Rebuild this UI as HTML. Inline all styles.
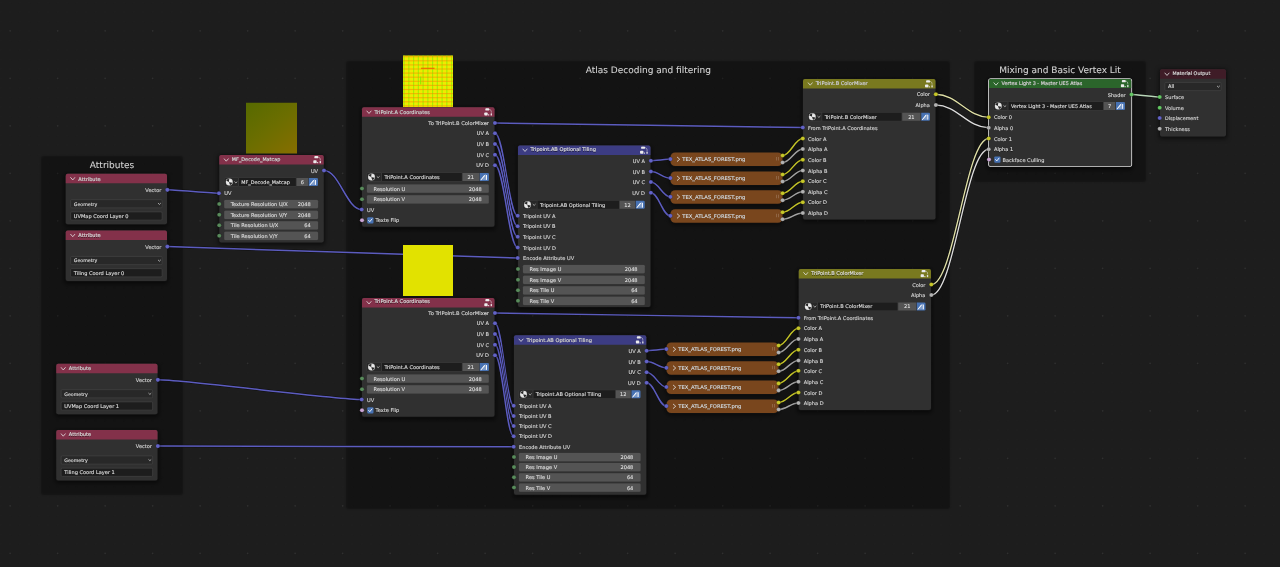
<!DOCTYPE html>
<html><head><meta charset="utf-8"><title>Node Editor</title><style>
*{box-sizing:border-box}
html,body{margin:0;padding:0}
body{width:1280px;height:567px;overflow:hidden;position:relative;background:#1d1d1d;font-family:"DejaVu Sans", "Liberation Sans", sans-serif;font-size:20.2px;color:#dcdcdc;line-height:32px;text-rendering:geometricPrecision;-webkit-text-stroke:0.56px currentColor}
svg.layer{position:absolute;left:0;top:0;width:5120px;height:2268px;overflow:visible}
#root{position:absolute;left:0;top:0;width:5120px;height:2268px;transform:scale(0.25);transform-origin:0 0}
#wrap{position:absolute;left:0;top:0;width:1280px;height:567px;will-change:transform;overflow:hidden}
#sub{position:absolute;left:0;top:0;width:5120px;height:2268px;background-image:radial-gradient(circle,#212121 0px,#212121 1.6px,rgba(33,33,33,0) 3.4px);background-size:38px 38px;background-position:-16.4px -9.2px}
.frame{position:absolute;background:rgba(0,0,0,0.33);border-radius:8px;box-shadow:0 0 5.2px 2px rgba(0,0,0,0.3)}
.ftitle{position:absolute;left:0;right:0;text-align:center;font-size:36px;line-height:44px;color:#d4d4d4;white-space:nowrap;-webkit-text-stroke:0.32px currentColor}
.node{position:absolute;background:#303030;border-radius:7.6px;box-shadow:0 0 0 2.4px #141414,0 6px 16px 4px rgba(0,0,0,0.55)}
.node.sel{box-shadow:0 0 0 3.4px #dadada,0 6px 16px 6px rgba(0,0,0,0.55)}
.hdr{position:absolute;left:0;top:0;right:0;border-radius:7.6px 7.6px 0 0;white-space:nowrap}
.chev{position:absolute;left:16.4px;top:7.6px;width:24px;height:24px}
.ht{position:absolute;left:50.4px;top:2px;line-height:32px;color:#e0e0e0;text-shadow:0 2px 2.4px rgba(0,0,0,0.7)}
.gicon{position:absolute;right:8.8px;top:3.2px;width:34px;height:31.6px}
.lab{position:absolute;white-space:nowrap;line-height:32px;text-shadow:0 1.6px 2px rgba(0,0,0,0.6)}
.fld{position:absolute;height:32.8px;background:#545454;border-radius:4.8px;line-height:32px;white-space:nowrap;box-shadow:0 0 0 1.2px #3d3d3d}
.fl{position:absolute;left:26.4px;top:1px}
.fv{position:absolute;right:28.8px;top:1px}
.sbtn,.sname,.snum,.sfake{position:absolute;height:32.4px;line-height:32.4px;white-space:nowrap;overflow:hidden}
.sbtn{background:#282828;border-radius:5.2px 0 0 5.2px;box-shadow:0 0 0 1.8px #3d3d3d}
.mico{position:absolute;left:4px;top:1.2px;width:30px;height:30px}
.dchev{position:absolute;width:16.8px;height:16.8px}
.sbtn .dchev{left:38.4px;top:9.6px;width:15.2px;height:15.2px}
.sname{background:#1d1d1d;padding-left:9.6px;box-shadow:0 0 0 1.8px #3a3a3a}
.snum{background:#545454;text-align:center}
.sfake{background:#4772b3;border-radius:0 5.2px 5.2px 0}
.fico{position:absolute;left:0;top:0;width:100%;height:100%}
.cb{position:absolute;width:25.2px;height:25.2px;background:#4772b3;border-radius:4px}
.ck{position:absolute;left:1.6px;top:1.6px;width:22px;height:22px}
.drop{position:absolute;height:36px;background:#282828;border-radius:6px;border:3px solid #424242;line-height:30px;white-space:nowrap}
.drop>span{position:absolute;left:10.8px;top:0}
.drop .dchev{right:1.6px;top:7.6px;width:15.2px;height:15.2px}
.txt{position:absolute;height:36px;background:#1d1d1d;border-radius:6px;border:3px solid #424242;line-height:30px;white-space:nowrap}
.txt>span{position:absolute;left:10.8px;top:0}
.pill{position:absolute;background:#79461d;border-radius:18.4px;box-shadow:0 0 0 2.4px #141414,0 6px 16px 4px rgba(0,0,0,0.5);white-space:nowrap}
.pill .chev{left:20.8px;top:15.2px}
.pill .ht{left:47.6px;top:9.6px}
.grip{position:absolute;right:14.4px;top:18px;width:9.6px;height:14.4px;border-left:2.4px solid rgba(255,255,255,0.35);border-right:2.4px solid rgba(255,255,255,0.35)}
.prev{position:absolute}
.prev.grid{background:repeating-linear-gradient(0deg,rgba(255,120,0,0) 0px,rgba(255,120,0,0.5) 4.4px,rgba(255,120,0,0) 8.8px,rgba(255,120,0,0) 16.4px),repeating-linear-gradient(90deg,rgba(110,240,0,0) 0px,rgba(110,240,0,0.6) 4.4px,rgba(110,240,0,0) 8.8px,rgba(110,240,0,0) 19px),#ecec00}
.prev i{position:absolute;display:block}
</style></head><body><div id="wrap"><div id="root">
<div id="sub"></div>
<svg class="layer" viewBox="0 0 1280 567"><g fill="#303030"><circle cx="10.15" cy="30.85" r="0.85"/><circle cx="10.15" cy="78.35" r="0.85"/><circle cx="10.15" cy="125.85" r="0.85"/><circle cx="10.15" cy="173.35" r="0.85"/><circle cx="10.15" cy="220.85" r="0.85"/><circle cx="10.15" cy="268.35" r="0.85"/><circle cx="10.15" cy="315.85" r="0.85"/><circle cx="10.15" cy="363.35" r="0.85"/><circle cx="10.15" cy="410.85" r="0.85"/><circle cx="10.15" cy="458.35" r="0.85"/><circle cx="10.15" cy="505.85" r="0.85"/><circle cx="10.15" cy="553.35" r="0.85"/><circle cx="57.65" cy="30.85" r="0.85"/><circle cx="57.65" cy="78.35" r="0.85"/><circle cx="57.65" cy="125.85" r="0.85"/><circle cx="57.65" cy="173.35" r="0.85"/><circle cx="57.65" cy="220.85" r="0.85"/><circle cx="57.65" cy="268.35" r="0.85"/><circle cx="57.65" cy="315.85" r="0.85"/><circle cx="57.65" cy="363.35" r="0.85"/><circle cx="57.65" cy="410.85" r="0.85"/><circle cx="57.65" cy="458.35" r="0.85"/><circle cx="57.65" cy="505.85" r="0.85"/><circle cx="57.65" cy="553.35" r="0.85"/><circle cx="105.15" cy="30.85" r="0.85"/><circle cx="105.15" cy="78.35" r="0.85"/><circle cx="105.15" cy="125.85" r="0.85"/><circle cx="105.15" cy="173.35" r="0.85"/><circle cx="105.15" cy="220.85" r="0.85"/><circle cx="105.15" cy="268.35" r="0.85"/><circle cx="105.15" cy="315.85" r="0.85"/><circle cx="105.15" cy="363.35" r="0.85"/><circle cx="105.15" cy="410.85" r="0.85"/><circle cx="105.15" cy="458.35" r="0.85"/><circle cx="105.15" cy="505.85" r="0.85"/><circle cx="105.15" cy="553.35" r="0.85"/><circle cx="152.65" cy="30.85" r="0.85"/><circle cx="152.65" cy="78.35" r="0.85"/><circle cx="152.65" cy="125.85" r="0.85"/><circle cx="152.65" cy="173.35" r="0.85"/><circle cx="152.65" cy="220.85" r="0.85"/><circle cx="152.65" cy="268.35" r="0.85"/><circle cx="152.65" cy="315.85" r="0.85"/><circle cx="152.65" cy="363.35" r="0.85"/><circle cx="152.65" cy="410.85" r="0.85"/><circle cx="152.65" cy="458.35" r="0.85"/><circle cx="152.65" cy="505.85" r="0.85"/><circle cx="152.65" cy="553.35" r="0.85"/><circle cx="200.15" cy="30.85" r="0.85"/><circle cx="200.15" cy="78.35" r="0.85"/><circle cx="200.15" cy="125.85" r="0.85"/><circle cx="200.15" cy="173.35" r="0.85"/><circle cx="200.15" cy="220.85" r="0.85"/><circle cx="200.15" cy="268.35" r="0.85"/><circle cx="200.15" cy="315.85" r="0.85"/><circle cx="200.15" cy="363.35" r="0.85"/><circle cx="200.15" cy="410.85" r="0.85"/><circle cx="200.15" cy="458.35" r="0.85"/><circle cx="200.15" cy="505.85" r="0.85"/><circle cx="200.15" cy="553.35" r="0.85"/><circle cx="247.65" cy="30.85" r="0.85"/><circle cx="247.65" cy="78.35" r="0.85"/><circle cx="247.65" cy="125.85" r="0.85"/><circle cx="247.65" cy="173.35" r="0.85"/><circle cx="247.65" cy="220.85" r="0.85"/><circle cx="247.65" cy="268.35" r="0.85"/><circle cx="247.65" cy="315.85" r="0.85"/><circle cx="247.65" cy="363.35" r="0.85"/><circle cx="247.65" cy="410.85" r="0.85"/><circle cx="247.65" cy="458.35" r="0.85"/><circle cx="247.65" cy="505.85" r="0.85"/><circle cx="247.65" cy="553.35" r="0.85"/><circle cx="295.15" cy="30.85" r="0.85"/><circle cx="295.15" cy="78.35" r="0.85"/><circle cx="295.15" cy="125.85" r="0.85"/><circle cx="295.15" cy="173.35" r="0.85"/><circle cx="295.15" cy="220.85" r="0.85"/><circle cx="295.15" cy="268.35" r="0.85"/><circle cx="295.15" cy="315.85" r="0.85"/><circle cx="295.15" cy="363.35" r="0.85"/><circle cx="295.15" cy="410.85" r="0.85"/><circle cx="295.15" cy="458.35" r="0.85"/><circle cx="295.15" cy="505.85" r="0.85"/><circle cx="295.15" cy="553.35" r="0.85"/><circle cx="342.65" cy="30.85" r="0.85"/><circle cx="342.65" cy="78.35" r="0.85"/><circle cx="342.65" cy="125.85" r="0.85"/><circle cx="342.65" cy="173.35" r="0.85"/><circle cx="342.65" cy="220.85" r="0.85"/><circle cx="342.65" cy="268.35" r="0.85"/><circle cx="342.65" cy="315.85" r="0.85"/><circle cx="342.65" cy="363.35" r="0.85"/><circle cx="342.65" cy="410.85" r="0.85"/><circle cx="342.65" cy="458.35" r="0.85"/><circle cx="342.65" cy="505.85" r="0.85"/><circle cx="342.65" cy="553.35" r="0.85"/><circle cx="390.15" cy="30.85" r="0.85"/><circle cx="390.15" cy="78.35" r="0.85"/><circle cx="390.15" cy="125.85" r="0.85"/><circle cx="390.15" cy="173.35" r="0.85"/><circle cx="390.15" cy="220.85" r="0.85"/><circle cx="390.15" cy="268.35" r="0.85"/><circle cx="390.15" cy="315.85" r="0.85"/><circle cx="390.15" cy="363.35" r="0.85"/><circle cx="390.15" cy="410.85" r="0.85"/><circle cx="390.15" cy="458.35" r="0.85"/><circle cx="390.15" cy="505.85" r="0.85"/><circle cx="390.15" cy="553.35" r="0.85"/><circle cx="437.65" cy="30.85" r="0.85"/><circle cx="437.65" cy="78.35" r="0.85"/><circle cx="437.65" cy="125.85" r="0.85"/><circle cx="437.65" cy="173.35" r="0.85"/><circle cx="437.65" cy="220.85" r="0.85"/><circle cx="437.65" cy="268.35" r="0.85"/><circle cx="437.65" cy="315.85" r="0.85"/><circle cx="437.65" cy="363.35" r="0.85"/><circle cx="437.65" cy="410.85" r="0.85"/><circle cx="437.65" cy="458.35" r="0.85"/><circle cx="437.65" cy="505.85" r="0.85"/><circle cx="437.65" cy="553.35" r="0.85"/><circle cx="485.15" cy="30.85" r="0.85"/><circle cx="485.15" cy="78.35" r="0.85"/><circle cx="485.15" cy="125.85" r="0.85"/><circle cx="485.15" cy="173.35" r="0.85"/><circle cx="485.15" cy="220.85" r="0.85"/><circle cx="485.15" cy="268.35" r="0.85"/><circle cx="485.15" cy="315.85" r="0.85"/><circle cx="485.15" cy="363.35" r="0.85"/><circle cx="485.15" cy="410.85" r="0.85"/><circle cx="485.15" cy="458.35" r="0.85"/><circle cx="485.15" cy="505.85" r="0.85"/><circle cx="485.15" cy="553.35" r="0.85"/><circle cx="532.65" cy="30.85" r="0.85"/><circle cx="532.65" cy="78.35" r="0.85"/><circle cx="532.65" cy="125.85" r="0.85"/><circle cx="532.65" cy="173.35" r="0.85"/><circle cx="532.65" cy="220.85" r="0.85"/><circle cx="532.65" cy="268.35" r="0.85"/><circle cx="532.65" cy="315.85" r="0.85"/><circle cx="532.65" cy="363.35" r="0.85"/><circle cx="532.65" cy="410.85" r="0.85"/><circle cx="532.65" cy="458.35" r="0.85"/><circle cx="532.65" cy="505.85" r="0.85"/><circle cx="532.65" cy="553.35" r="0.85"/><circle cx="580.15" cy="30.85" r="0.85"/><circle cx="580.15" cy="78.35" r="0.85"/><circle cx="580.15" cy="125.85" r="0.85"/><circle cx="580.15" cy="173.35" r="0.85"/><circle cx="580.15" cy="220.85" r="0.85"/><circle cx="580.15" cy="268.35" r="0.85"/><circle cx="580.15" cy="315.85" r="0.85"/><circle cx="580.15" cy="363.35" r="0.85"/><circle cx="580.15" cy="410.85" r="0.85"/><circle cx="580.15" cy="458.35" r="0.85"/><circle cx="580.15" cy="505.85" r="0.85"/><circle cx="580.15" cy="553.35" r="0.85"/><circle cx="627.65" cy="30.85" r="0.85"/><circle cx="627.65" cy="78.35" r="0.85"/><circle cx="627.65" cy="125.85" r="0.85"/><circle cx="627.65" cy="173.35" r="0.85"/><circle cx="627.65" cy="220.85" r="0.85"/><circle cx="627.65" cy="268.35" r="0.85"/><circle cx="627.65" cy="315.85" r="0.85"/><circle cx="627.65" cy="363.35" r="0.85"/><circle cx="627.65" cy="410.85" r="0.85"/><circle cx="627.65" cy="458.35" r="0.85"/><circle cx="627.65" cy="505.85" r="0.85"/><circle cx="627.65" cy="553.35" r="0.85"/><circle cx="675.15" cy="30.85" r="0.85"/><circle cx="675.15" cy="78.35" r="0.85"/><circle cx="675.15" cy="125.85" r="0.85"/><circle cx="675.15" cy="173.35" r="0.85"/><circle cx="675.15" cy="220.85" r="0.85"/><circle cx="675.15" cy="268.35" r="0.85"/><circle cx="675.15" cy="315.85" r="0.85"/><circle cx="675.15" cy="363.35" r="0.85"/><circle cx="675.15" cy="410.85" r="0.85"/><circle cx="675.15" cy="458.35" r="0.85"/><circle cx="675.15" cy="505.85" r="0.85"/><circle cx="675.15" cy="553.35" r="0.85"/><circle cx="722.65" cy="30.85" r="0.85"/><circle cx="722.65" cy="78.35" r="0.85"/><circle cx="722.65" cy="125.85" r="0.85"/><circle cx="722.65" cy="173.35" r="0.85"/><circle cx="722.65" cy="220.85" r="0.85"/><circle cx="722.65" cy="268.35" r="0.85"/><circle cx="722.65" cy="315.85" r="0.85"/><circle cx="722.65" cy="363.35" r="0.85"/><circle cx="722.65" cy="410.85" r="0.85"/><circle cx="722.65" cy="458.35" r="0.85"/><circle cx="722.65" cy="505.85" r="0.85"/><circle cx="722.65" cy="553.35" r="0.85"/><circle cx="770.15" cy="30.85" r="0.85"/><circle cx="770.15" cy="78.35" r="0.85"/><circle cx="770.15" cy="125.85" r="0.85"/><circle cx="770.15" cy="173.35" r="0.85"/><circle cx="770.15" cy="220.85" r="0.85"/><circle cx="770.15" cy="268.35" r="0.85"/><circle cx="770.15" cy="315.85" r="0.85"/><circle cx="770.15" cy="363.35" r="0.85"/><circle cx="770.15" cy="410.85" r="0.85"/><circle cx="770.15" cy="458.35" r="0.85"/><circle cx="770.15" cy="505.85" r="0.85"/><circle cx="770.15" cy="553.35" r="0.85"/><circle cx="817.65" cy="30.85" r="0.85"/><circle cx="817.65" cy="78.35" r="0.85"/><circle cx="817.65" cy="125.85" r="0.85"/><circle cx="817.65" cy="173.35" r="0.85"/><circle cx="817.65" cy="220.85" r="0.85"/><circle cx="817.65" cy="268.35" r="0.85"/><circle cx="817.65" cy="315.85" r="0.85"/><circle cx="817.65" cy="363.35" r="0.85"/><circle cx="817.65" cy="410.85" r="0.85"/><circle cx="817.65" cy="458.35" r="0.85"/><circle cx="817.65" cy="505.85" r="0.85"/><circle cx="817.65" cy="553.35" r="0.85"/><circle cx="865.15" cy="30.85" r="0.85"/><circle cx="865.15" cy="78.35" r="0.85"/><circle cx="865.15" cy="125.85" r="0.85"/><circle cx="865.15" cy="173.35" r="0.85"/><circle cx="865.15" cy="220.85" r="0.85"/><circle cx="865.15" cy="268.35" r="0.85"/><circle cx="865.15" cy="315.85" r="0.85"/><circle cx="865.15" cy="363.35" r="0.85"/><circle cx="865.15" cy="410.85" r="0.85"/><circle cx="865.15" cy="458.35" r="0.85"/><circle cx="865.15" cy="505.85" r="0.85"/><circle cx="865.15" cy="553.35" r="0.85"/><circle cx="912.65" cy="30.85" r="0.85"/><circle cx="912.65" cy="78.35" r="0.85"/><circle cx="912.65" cy="125.85" r="0.85"/><circle cx="912.65" cy="173.35" r="0.85"/><circle cx="912.65" cy="220.85" r="0.85"/><circle cx="912.65" cy="268.35" r="0.85"/><circle cx="912.65" cy="315.85" r="0.85"/><circle cx="912.65" cy="363.35" r="0.85"/><circle cx="912.65" cy="410.85" r="0.85"/><circle cx="912.65" cy="458.35" r="0.85"/><circle cx="912.65" cy="505.85" r="0.85"/><circle cx="912.65" cy="553.35" r="0.85"/><circle cx="960.15" cy="30.85" r="0.85"/><circle cx="960.15" cy="78.35" r="0.85"/><circle cx="960.15" cy="125.85" r="0.85"/><circle cx="960.15" cy="173.35" r="0.85"/><circle cx="960.15" cy="220.85" r="0.85"/><circle cx="960.15" cy="268.35" r="0.85"/><circle cx="960.15" cy="315.85" r="0.85"/><circle cx="960.15" cy="363.35" r="0.85"/><circle cx="960.15" cy="410.85" r="0.85"/><circle cx="960.15" cy="458.35" r="0.85"/><circle cx="960.15" cy="505.85" r="0.85"/><circle cx="960.15" cy="553.35" r="0.85"/><circle cx="1007.65" cy="30.85" r="0.85"/><circle cx="1007.65" cy="78.35" r="0.85"/><circle cx="1007.65" cy="125.85" r="0.85"/><circle cx="1007.65" cy="173.35" r="0.85"/><circle cx="1007.65" cy="220.85" r="0.85"/><circle cx="1007.65" cy="268.35" r="0.85"/><circle cx="1007.65" cy="315.85" r="0.85"/><circle cx="1007.65" cy="363.35" r="0.85"/><circle cx="1007.65" cy="410.85" r="0.85"/><circle cx="1007.65" cy="458.35" r="0.85"/><circle cx="1007.65" cy="505.85" r="0.85"/><circle cx="1007.65" cy="553.35" r="0.85"/><circle cx="1055.15" cy="30.85" r="0.85"/><circle cx="1055.15" cy="78.35" r="0.85"/><circle cx="1055.15" cy="125.85" r="0.85"/><circle cx="1055.15" cy="173.35" r="0.85"/><circle cx="1055.15" cy="220.85" r="0.85"/><circle cx="1055.15" cy="268.35" r="0.85"/><circle cx="1055.15" cy="315.85" r="0.85"/><circle cx="1055.15" cy="363.35" r="0.85"/><circle cx="1055.15" cy="410.85" r="0.85"/><circle cx="1055.15" cy="458.35" r="0.85"/><circle cx="1055.15" cy="505.85" r="0.85"/><circle cx="1055.15" cy="553.35" r="0.85"/><circle cx="1102.65" cy="30.85" r="0.85"/><circle cx="1102.65" cy="78.35" r="0.85"/><circle cx="1102.65" cy="125.85" r="0.85"/><circle cx="1102.65" cy="173.35" r="0.85"/><circle cx="1102.65" cy="220.85" r="0.85"/><circle cx="1102.65" cy="268.35" r="0.85"/><circle cx="1102.65" cy="315.85" r="0.85"/><circle cx="1102.65" cy="363.35" r="0.85"/><circle cx="1102.65" cy="410.85" r="0.85"/><circle cx="1102.65" cy="458.35" r="0.85"/><circle cx="1102.65" cy="505.85" r="0.85"/><circle cx="1102.65" cy="553.35" r="0.85"/><circle cx="1150.15" cy="30.85" r="0.85"/><circle cx="1150.15" cy="78.35" r="0.85"/><circle cx="1150.15" cy="125.85" r="0.85"/><circle cx="1150.15" cy="173.35" r="0.85"/><circle cx="1150.15" cy="220.85" r="0.85"/><circle cx="1150.15" cy="268.35" r="0.85"/><circle cx="1150.15" cy="315.85" r="0.85"/><circle cx="1150.15" cy="363.35" r="0.85"/><circle cx="1150.15" cy="410.85" r="0.85"/><circle cx="1150.15" cy="458.35" r="0.85"/><circle cx="1150.15" cy="505.85" r="0.85"/><circle cx="1150.15" cy="553.35" r="0.85"/><circle cx="1197.65" cy="30.85" r="0.85"/><circle cx="1197.65" cy="78.35" r="0.85"/><circle cx="1197.65" cy="125.85" r="0.85"/><circle cx="1197.65" cy="173.35" r="0.85"/><circle cx="1197.65" cy="220.85" r="0.85"/><circle cx="1197.65" cy="268.35" r="0.85"/><circle cx="1197.65" cy="315.85" r="0.85"/><circle cx="1197.65" cy="363.35" r="0.85"/><circle cx="1197.65" cy="410.85" r="0.85"/><circle cx="1197.65" cy="458.35" r="0.85"/><circle cx="1197.65" cy="505.85" r="0.85"/><circle cx="1197.65" cy="553.35" r="0.85"/><circle cx="1245.15" cy="30.85" r="0.85"/><circle cx="1245.15" cy="78.35" r="0.85"/><circle cx="1245.15" cy="125.85" r="0.85"/><circle cx="1245.15" cy="173.35" r="0.85"/><circle cx="1245.15" cy="220.85" r="0.85"/><circle cx="1245.15" cy="268.35" r="0.85"/><circle cx="1245.15" cy="315.85" r="0.85"/><circle cx="1245.15" cy="363.35" r="0.85"/><circle cx="1245.15" cy="410.85" r="0.85"/><circle cx="1245.15" cy="458.35" r="0.85"/><circle cx="1245.15" cy="505.85" r="0.85"/><circle cx="1245.15" cy="553.35" r="0.85"/></g></svg>
<div class="frame" style="left:168px;top:628px;width:560.4px;height:1347.2px"><div class="ftitle" style="top:10.8px">Attributes</div></div><div class="frame" style="left:1389.2px;top:248px;width:2408px;height:1784.8px"><div class="ftitle" style="top:8.8px">Atlas Decoding and filtering</div></div><div class="frame" style="left:3900px;top:248px;width:680.4px;height:474.8px"><div class="ftitle" style="top:8.8px">Mixing and Basic Vertex Lit</div></div>
<svg class="layer" viewBox="0 0 1280 567"><path d="M167.35 189.85C172.11 189.85 214.19 193.25 218.95 193.25" stroke="#0e0e0e" stroke-width="2.5" fill="none"/><path d="M167.35 189.85C172.11 189.85 214.19 193.25 218.95 193.25" stroke="#5c5cbf" stroke-width="1.5" fill="none"/><path d="M167.35 246.60C183.31 246.60 501.74 258.00 517.70 258.00" stroke="#0e0e0e" stroke-width="2.5" fill="none"/><path d="M167.35 246.60C183.31 246.60 501.74 258.00 517.70 258.00" stroke="#5c5cbf" stroke-width="1.5" fill="none"/><path d="M157.85 379.85C185.36 379.85 334.19 399.50 361.70 399.50" stroke="#0e0e0e" stroke-width="2.5" fill="none"/><path d="M157.85 379.85C185.36 379.85 334.19 399.50 361.70 399.50" stroke="#5c5cbf" stroke-width="1.5" fill="none"/><path d="M157.85 446.10C158.76 446.10 512.79 446.75 513.70 446.75" stroke="#0e0e0e" stroke-width="2.5" fill="none"/><path d="M157.85 446.10C158.76 446.10 512.79 446.75 513.70 446.75" stroke="#5c5cbf" stroke-width="1.5" fill="none"/><path d="M324.00 170.50C339.08 170.50 346.62 209.50 361.70 209.50" stroke="#0e0e0e" stroke-width="2.5" fill="none"/><path d="M324.00 170.50C339.08 170.50 346.62 209.50 361.70 209.50" stroke="#5c5cbf" stroke-width="1.5" fill="none"/><path d="M494.95 123.00C501.25 123.00 796.50 127.50 802.80 127.50" stroke="#0e0e0e" stroke-width="2.5" fill="none"/><path d="M494.95 123.00C501.25 123.00 796.50 127.50 802.80 127.50" stroke="#5c5cbf" stroke-width="1.5" fill="none"/><path d="M494.95 133.25C504.05 133.25 508.60 215.75 517.70 215.75" stroke="#0e0e0e" stroke-width="2.5" fill="none"/><path d="M494.95 133.25C504.05 133.25 508.60 215.75 517.70 215.75" stroke="#5c5cbf" stroke-width="1.5" fill="none"/><path d="M650.85 160.75C653.16 160.75 668.09 159.10 670.40 159.10" stroke="#0e0e0e" stroke-width="2.5" fill="none"/><path d="M650.85 160.75C653.16 160.75 668.09 159.10 670.40 159.10" stroke="#5c5cbf" stroke-width="1.5" fill="none"/><path d="M782.60 155.50C790.68 155.50 794.72 138.50 802.80 138.50" stroke="#0e0e0e" stroke-width="2.5" fill="none"/><path d="M782.60 155.50C790.68 155.50 794.72 138.50 802.80 138.50" stroke="#c4c428" stroke-width="1.5" fill="none"/><path d="M782.60 162.50C790.68 162.50 794.72 149.00 802.80 149.00" stroke="#0e0e0e" stroke-width="2.5" fill="none"/><path d="M782.60 162.50C790.68 162.50 794.72 149.00 802.80 149.00" stroke="#a3a3a3" stroke-width="1.5" fill="none"/><path d="M494.95 144.00C504.05 144.00 508.60 226.25 517.70 226.25" stroke="#0e0e0e" stroke-width="2.5" fill="none"/><path d="M494.95 144.00C504.05 144.00 508.60 226.25 517.70 226.25" stroke="#5c5cbf" stroke-width="1.5" fill="none"/><path d="M650.85 171.50C658.67 171.50 662.58 178.10 670.40 178.10" stroke="#0e0e0e" stroke-width="2.5" fill="none"/><path d="M650.85 171.50C658.67 171.50 662.58 178.10 670.40 178.10" stroke="#5c5cbf" stroke-width="1.5" fill="none"/><path d="M782.60 174.50C790.68 174.50 794.72 159.75 802.80 159.75" stroke="#0e0e0e" stroke-width="2.5" fill="none"/><path d="M782.60 174.50C790.68 174.50 794.72 159.75 802.80 159.75" stroke="#c4c428" stroke-width="1.5" fill="none"/><path d="M782.60 181.50C790.68 181.50 794.72 170.50 802.80 170.50" stroke="#0e0e0e" stroke-width="2.5" fill="none"/><path d="M782.60 181.50C790.68 181.50 794.72 170.50 802.80 170.50" stroke="#a3a3a3" stroke-width="1.5" fill="none"/><path d="M494.95 154.75C504.05 154.75 508.60 236.75 517.70 236.75" stroke="#0e0e0e" stroke-width="2.5" fill="none"/><path d="M494.95 154.75C504.05 154.75 508.60 236.75 517.70 236.75" stroke="#5c5cbf" stroke-width="1.5" fill="none"/><path d="M650.85 182.00C658.67 182.00 662.58 196.85 670.40 196.85" stroke="#0e0e0e" stroke-width="2.5" fill="none"/><path d="M650.85 182.00C658.67 182.00 662.58 196.85 670.40 196.85" stroke="#5c5cbf" stroke-width="1.5" fill="none"/><path d="M782.60 193.25C790.68 193.25 794.72 181.25 802.80 181.25" stroke="#0e0e0e" stroke-width="2.5" fill="none"/><path d="M782.60 193.25C790.68 193.25 794.72 181.25 802.80 181.25" stroke="#c4c428" stroke-width="1.5" fill="none"/><path d="M782.60 200.25C790.68 200.25 794.72 191.75 802.80 191.75" stroke="#0e0e0e" stroke-width="2.5" fill="none"/><path d="M782.60 200.25C790.68 200.25 794.72 191.75 802.80 191.75" stroke="#a3a3a3" stroke-width="1.5" fill="none"/><path d="M494.95 165.25C504.05 165.25 508.60 247.50 517.70 247.50" stroke="#0e0e0e" stroke-width="2.5" fill="none"/><path d="M494.95 165.25C504.05 165.25 508.60 247.50 517.70 247.50" stroke="#5c5cbf" stroke-width="1.5" fill="none"/><path d="M650.85 192.75C658.67 192.75 662.58 215.85 670.40 215.85" stroke="#0e0e0e" stroke-width="2.5" fill="none"/><path d="M650.85 192.75C658.67 192.75 662.58 215.85 670.40 215.85" stroke="#5c5cbf" stroke-width="1.5" fill="none"/><path d="M782.60 212.25C790.68 212.25 794.72 202.25 802.80 202.25" stroke="#0e0e0e" stroke-width="2.5" fill="none"/><path d="M782.60 212.25C790.68 212.25 794.72 202.25 802.80 202.25" stroke="#c4c428" stroke-width="1.5" fill="none"/><path d="M782.60 219.25C790.68 219.25 794.72 213.00 802.80 213.00" stroke="#0e0e0e" stroke-width="2.5" fill="none"/><path d="M782.60 219.25C790.68 219.25 794.72 213.00 802.80 213.00" stroke="#a3a3a3" stroke-width="1.5" fill="none"/><path d="M494.95 313.00C501.60 313.00 791.80 317.75 798.45 317.75" stroke="#0e0e0e" stroke-width="2.5" fill="none"/><path d="M494.95 313.00C501.60 313.00 791.80 317.75 798.45 317.75" stroke="#5c5cbf" stroke-width="1.5" fill="none"/><path d="M494.95 323.25C502.45 323.25 506.20 405.75 513.70 405.75" stroke="#0e0e0e" stroke-width="2.5" fill="none"/><path d="M494.95 323.25C502.45 323.25 506.20 405.75 513.70 405.75" stroke="#5c5cbf" stroke-width="1.5" fill="none"/><path d="M646.60 350.75C648.91 350.75 664.09 349.10 666.40 349.10" stroke="#0e0e0e" stroke-width="2.5" fill="none"/><path d="M646.60 350.75C648.91 350.75 664.09 349.10 666.40 349.10" stroke="#5c5cbf" stroke-width="1.5" fill="none"/><path d="M778.60 345.50C786.54 345.50 790.51 328.25 798.45 328.25" stroke="#0e0e0e" stroke-width="2.5" fill="none"/><path d="M778.60 345.50C786.54 345.50 790.51 328.25 798.45 328.25" stroke="#c4c428" stroke-width="1.5" fill="none"/><path d="M778.60 352.50C786.54 352.50 790.51 339.00 798.45 339.00" stroke="#0e0e0e" stroke-width="2.5" fill="none"/><path d="M778.60 352.50C786.54 352.50 790.51 339.00 798.45 339.00" stroke="#a3a3a3" stroke-width="1.5" fill="none"/><path d="M494.95 334.00C502.45 334.00 506.20 416.00 513.70 416.00" stroke="#0e0e0e" stroke-width="2.5" fill="none"/><path d="M494.95 334.00C502.45 334.00 506.20 416.00 513.70 416.00" stroke="#5c5cbf" stroke-width="1.5" fill="none"/><path d="M646.60 361.50C654.52 361.50 658.48 367.85 666.40 367.85" stroke="#0e0e0e" stroke-width="2.5" fill="none"/><path d="M646.60 361.50C654.52 361.50 658.48 367.85 666.40 367.85" stroke="#5c5cbf" stroke-width="1.5" fill="none"/><path d="M778.60 364.25C786.54 364.25 790.51 349.75 798.45 349.75" stroke="#0e0e0e" stroke-width="2.5" fill="none"/><path d="M778.60 364.25C786.54 364.25 790.51 349.75 798.45 349.75" stroke="#c4c428" stroke-width="1.5" fill="none"/><path d="M778.60 371.25C786.54 371.25 790.51 360.50 798.45 360.50" stroke="#0e0e0e" stroke-width="2.5" fill="none"/><path d="M778.60 371.25C786.54 371.25 790.51 360.50 798.45 360.50" stroke="#a3a3a3" stroke-width="1.5" fill="none"/><path d="M494.95 344.75C502.45 344.75 506.20 426.00 513.70 426.00" stroke="#0e0e0e" stroke-width="2.5" fill="none"/><path d="M494.95 344.75C502.45 344.75 506.20 426.00 513.70 426.00" stroke="#5c5cbf" stroke-width="1.5" fill="none"/><path d="M646.60 372.25C654.52 372.25 658.48 387.00 666.40 387.00" stroke="#0e0e0e" stroke-width="2.5" fill="none"/><path d="M646.60 372.25C654.52 372.25 658.48 387.00 666.40 387.00" stroke="#5c5cbf" stroke-width="1.5" fill="none"/><path d="M778.60 383.40C786.54 383.40 790.51 370.75 798.45 370.75" stroke="#0e0e0e" stroke-width="2.5" fill="none"/><path d="M778.60 383.40C786.54 383.40 790.51 370.75 798.45 370.75" stroke="#c4c428" stroke-width="1.5" fill="none"/><path d="M778.60 390.40C786.54 390.40 790.51 381.75 798.45 381.75" stroke="#0e0e0e" stroke-width="2.5" fill="none"/><path d="M778.60 390.40C786.54 390.40 790.51 381.75 798.45 381.75" stroke="#a3a3a3" stroke-width="1.5" fill="none"/><path d="M494.95 355.25C502.45 355.25 506.20 436.25 513.70 436.25" stroke="#0e0e0e" stroke-width="2.5" fill="none"/><path d="M494.95 355.25C502.45 355.25 506.20 436.25 513.70 436.25" stroke="#5c5cbf" stroke-width="1.5" fill="none"/><path d="M646.60 382.75C654.52 382.75 658.48 406.10 666.40 406.10" stroke="#0e0e0e" stroke-width="2.5" fill="none"/><path d="M646.60 382.75C654.52 382.75 658.48 406.10 666.40 406.10" stroke="#5c5cbf" stroke-width="1.5" fill="none"/><path d="M778.60 402.50C786.54 402.50 790.51 392.50 798.45 392.50" stroke="#0e0e0e" stroke-width="2.5" fill="none"/><path d="M778.60 402.50C786.54 402.50 790.51 392.50 798.45 392.50" stroke="#c4c428" stroke-width="1.5" fill="none"/><path d="M778.60 409.50C786.54 409.50 790.51 403.00 798.45 403.00" stroke="#0e0e0e" stroke-width="2.5" fill="none"/><path d="M778.60 409.50C786.54 409.50 790.51 403.00 798.45 403.00" stroke="#a3a3a3" stroke-width="1.5" fill="none"/><path d="M935.85 94.25C956.99 94.25 967.56 117.25 988.70 117.25" stroke="#0e0e0e" stroke-width="2.3" fill="none"/><path d="M935.85 94.25C956.99 94.25 967.56 117.25 988.70 117.25" stroke="#e0e0a6" stroke-width="1.3" fill="none"/><path d="M935.85 105.00C956.99 105.00 967.56 127.75 988.70 127.75" stroke="#0e0e0e" stroke-width="2.3" fill="none"/><path d="M935.85 105.00C956.99 105.00 967.56 127.75 988.70 127.75" stroke="#dedede" stroke-width="1.3" fill="none"/><path d="M931.35 284.50C954.29 284.50 965.76 138.50 988.70 138.50" stroke="#0e0e0e" stroke-width="2.3" fill="none"/><path d="M931.35 284.50C954.29 284.50 965.76 138.50 988.70 138.50" stroke="#e0e0a6" stroke-width="1.3" fill="none"/><path d="M931.35 295.00C954.29 295.00 965.76 149.25 988.70 149.25" stroke="#0e0e0e" stroke-width="2.3" fill="none"/><path d="M931.35 295.00C954.29 295.00 965.76 149.25 988.70 149.25" stroke="#dedede" stroke-width="1.3" fill="none"/><path d="M1131.55 94.50C1135.05 94.50 1156.20 97.00 1159.70 97.00" stroke="#0e0e0e" stroke-width="2.3" fill="none"/><path d="M1131.55 94.50C1135.05 94.50 1156.20 97.00 1159.70 97.00" stroke="#b8d6b8" stroke-width="1.3" fill="none"/></svg>
<div class="node" style="left:263px;top:695px;width:405px;height:201.6px"><div class="hdr" style="height:38px;background:#83314a"><svg class="chev" viewBox="0 0 10 10"><path d="M1.5 3 L5 7 L8.5 3" fill="none" stroke="#e4e4e4" stroke-width="1.35" stroke-linecap="round" stroke-linejoin="round"/></svg><span class="ht" style="top:4px">Attribute</span></div><div class="lab r" style="top:49.4px;right:22.4px">Vector</div><div class="drop" style="top:102.2px;left:18.4px;right:18.4px"><span><span style="font-size:18.8px">Geometry</span></span><svg class="dchev" viewBox="0 0 10 10"><path d="M2 3.5 L5 6.5 L8 3.5" fill="none" stroke="#d8d8d8" stroke-width="1.9" stroke-linecap="round" stroke-linejoin="round"/></svg></div><div class="txt" style="top:151px;left:18.4px;right:18.4px"><span>UVMap Coord Layer 0</span></div></div><div class="node" style="left:263px;top:922px;width:405px;height:201.6px"><div class="hdr" style="height:38px;background:#83314a"><svg class="chev" viewBox="0 0 10 10"><path d="M1.5 3 L5 7 L8.5 3" fill="none" stroke="#e4e4e4" stroke-width="1.35" stroke-linecap="round" stroke-linejoin="round"/></svg><span class="ht" style="top:4px">Attribute</span></div><div class="lab r" style="top:49.4px;right:22.4px">Vector</div><div class="drop" style="top:102.2px;left:18.4px;right:18.4px"><span><span style="font-size:18.8px">Geometry</span></span><svg class="dchev" viewBox="0 0 10 10"><path d="M2 3.5 L5 6.5 L8 3.5" fill="none" stroke="#d8d8d8" stroke-width="1.9" stroke-linecap="round" stroke-linejoin="round"/></svg></div><div class="txt" style="top:151px;left:18.4px;right:18.4px"><span>Tiling Coord Layer 0</span></div></div><div class="node" style="left:225px;top:1455px;width:405px;height:201.6px"><div class="hdr" style="height:38px;background:#83314a"><svg class="chev" viewBox="0 0 10 10"><path d="M1.5 3 L5 7 L8.5 3" fill="none" stroke="#e4e4e4" stroke-width="1.35" stroke-linecap="round" stroke-linejoin="round"/></svg><span class="ht" style="top:0.8px">Attribute</span></div><div class="lab r" style="top:49.4px;right:22.4px">Vector</div><div class="drop" style="top:102.2px;left:18.4px;right:18.4px"><span><span style="font-size:18.8px">Geometry</span></span><svg class="dchev" viewBox="0 0 10 10"><path d="M2 3.5 L5 6.5 L8 3.5" fill="none" stroke="#d8d8d8" stroke-width="1.9" stroke-linecap="round" stroke-linejoin="round"/></svg></div><div class="txt" style="top:151px;left:18.4px;right:18.4px"><span>UVMap Coord Layer 1</span></div></div><div class="node" style="left:225px;top:1720px;width:405px;height:201.6px"><div class="hdr" style="height:38px;background:#83314a"><svg class="chev" viewBox="0 0 10 10"><path d="M1.5 3 L5 7 L8.5 3" fill="none" stroke="#e4e4e4" stroke-width="1.35" stroke-linecap="round" stroke-linejoin="round"/></svg><span class="ht" style="top:2px">Attribute</span></div><div class="lab r" style="top:49.4px;right:22.4px">Vector</div><div class="drop" style="top:102.2px;left:18.4px;right:18.4px"><span><span style="font-size:18.8px">Geometry</span></span><svg class="dchev" viewBox="0 0 10 10"><path d="M2 3.5 L5 6.5 L8 3.5" fill="none" stroke="#d8d8d8" stroke-width="1.9" stroke-linecap="round" stroke-linejoin="round"/></svg></div><div class="txt" style="top:151px;left:18.4px;right:18.4px"><span>Tiling Coord Layer 1</span></div></div><div class="node" style="left:877px;top:620px;width:417.6px;height:350px"><div class="hdr" style="height:38px;background:#83314a"><svg class="chev" viewBox="0 0 10 10"><path d="M1.5 3 L5 7 L8.5 3" fill="none" stroke="#e4e4e4" stroke-width="1.35" stroke-linecap="round" stroke-linejoin="round"/></svg><span class="ht" style="top:-1.2px"><span style="font-size:19.6px">MF_Decode_Matcap</span></span><svg class="gicon" viewBox="0 0 16 16"><rect x="2.1" y="0.6" width="8" height="4.6" rx="1.7" fill="#ececec"/><rect x="0" y="8.9" width="6.8" height="6.1" rx="1.5" fill="#ececec"/><path d="M10 2.9 C13 2.9 14.3 5 14.3 9.5" fill="none" stroke="#ececec" stroke-width="1.2" opacity="0.85"/><rect x="7.6" y="12.6" width="2.3" height="2.8" rx="0.5" fill="#ececec" opacity="0.9"/><rect x="12.8" y="10.8" width="2.8" height="4.6" rx="0.6" fill="#ececec" opacity="0.9"/></svg></div><div class="lab r" style="top:47px;right:22.4px">UV</div><div class="sbtn" style="top:92px;left:20.6px;width:54.4px"><svg class="mico" viewBox="0 0 16 16"><circle cx="8" cy="8" r="7.3" fill="#e8e8e8"/><path d="M7.6 8.2 C7.2 5.5 7.4 3 8.2 0.8 A7.3 7.3 0 0 0 1.2 5.4 C3 6 5.5 7 7.6 8.2Z" fill="#262626"/><path d="M7.6 8.2 C10 9 12.6 9.4 15 9.6 A7.3 7.3 0 0 1 10 15 C9 13 8 10.5 7.6 8.2Z" fill="#262626"/><circle cx="8" cy="8" r="7.3" fill="none" stroke="#bdbdbd" stroke-width="0.8"/></svg><svg class="dchev" viewBox="0 0 10 10"><path d="M2 3.5 L5 6.5 L8 3.5" fill="none" stroke="#d8d8d8" stroke-width="1.9" stroke-linecap="round" stroke-linejoin="round"/></svg></div><div class="sname" style="top:92px;left:78.6px;width:227.6px"><span style="font-size:19.6px">MF_Decode_Matcap</span></div><div class="snum" style="top:92px;left:309.4px;width:45.2px">6</div><div class="sfake" style="top:92px;left:358.2px;width:36.4px"><svg class="fico" viewBox="0 0 9 8" preserveAspectRatio="none"><path d="M4.7 2.5 L5.6 0.9 L6.7 1.9 L6.7 6.8 L2.2 6.8 Z" fill="#fff" opacity="0.3"/><path d="M1.3 6.7 L4.7 2.6" stroke="#fff" stroke-width="1.0" stroke-linecap="round" fill="none"/><path d="M6.75 2 L6.75 6.8" stroke="#fff" stroke-width="0.95" fill="none"/></svg></div><div class="lab" style="top:138px;left:20px">UV</div><div class="fld" style="top:179.8px;left:20px;right:23px"><span class="fl">Texture Resolution U/X</span><span class="fv">2048</span></div><div class="fld" style="top:222.8px;left:20px;right:23px"><span class="fl">Texture Resolution V/Y</span><span class="fv">2048</span></div><div class="fld" style="top:264.8px;left:20px;right:23px"><span class="fl">Tile Resolution U/X</span><span class="fv">64</span></div><div class="fld" style="top:306.8px;left:20px;right:23px"><span class="fl">Tile Resolution V/Y</span><span class="fv">64</span></div></div><div class="prev" style="left:984px;top:411.2px;width:204.4px;height:202.8px;background:linear-gradient(140deg,#566a00 0%,#6c6e00 50%,#876e00 100%)"></div><div class="node" style="left:1448px;top:429px;width:530.4px;height:477.6px"><div class="hdr" style="height:38px;background:#83314a"><svg class="chev" viewBox="0 0 10 10"><path d="M1.5 3 L5 7 L8.5 3" fill="none" stroke="#e4e4e4" stroke-width="1.35" stroke-linecap="round" stroke-linejoin="round"/></svg><span class="ht" style="top:2px">TriPoint.A Coordinates</span><svg class="gicon" viewBox="0 0 16 16"><rect x="2.1" y="0.6" width="8" height="4.6" rx="1.7" fill="#ececec"/><rect x="0" y="8.9" width="6.8" height="6.1" rx="1.5" fill="#ececec"/><path d="M10 2.9 C13 2.9 14.3 5 14.3 9.5" fill="none" stroke="#ececec" stroke-width="1.2" opacity="0.85"/><rect x="7.6" y="12.6" width="2.3" height="2.8" rx="0.5" fill="#ececec" opacity="0.9"/><rect x="12.8" y="10.8" width="2.8" height="4.6" rx="0.6" fill="#ececec" opacity="0.9"/></svg></div><div class="lab r" style="top:48px;right:22.4px"><span style="font-size:20.8px">To TriPoint.B ColorMixer</span></div><div class="lab r" style="top:89px;right:22.4px">UV A</div><div class="lab r" style="top:132px;right:22.4px">UV B</div><div class="lab r" style="top:175px;right:22.4px">UV C</div><div class="lab r" style="top:217px;right:22.4px">UV D</div><div class="sbtn" style="top:262.6px;left:18.8px;width:57.6px"><svg class="mico" viewBox="0 0 16 16"><circle cx="8" cy="8" r="7.3" fill="#e8e8e8"/><path d="M7.6 8.2 C7.2 5.5 7.4 3 8.2 0.8 A7.3 7.3 0 0 0 1.2 5.4 C3 6 5.5 7 7.6 8.2Z" fill="#262626"/><path d="M7.6 8.2 C10 9 12.6 9.4 15 9.6 A7.3 7.3 0 0 1 10 15 C9 13 8 10.5 7.6 8.2Z" fill="#262626"/><circle cx="8" cy="8" r="7.3" fill="none" stroke="#bdbdbd" stroke-width="0.8"/></svg><svg class="dchev" viewBox="0 0 10 10"><path d="M2 3.5 L5 6.5 L8 3.5" fill="none" stroke="#d8d8d8" stroke-width="1.9" stroke-linecap="round" stroke-linejoin="round"/></svg></div><div class="sname" style="top:262.6px;left:80px;width:319.2px">TriPoint.A Coordinates</div><div class="snum" style="top:262.6px;left:401.6px;width:67px">21</div><div class="sfake" style="top:262.6px;left:471.4px;width:36.2px"><svg class="fico" viewBox="0 0 9 8" preserveAspectRatio="none"><path d="M4.7 2.5 L5.6 0.9 L6.7 1.9 L6.7 6.8 L2.2 6.8 Z" fill="#fff" opacity="0.3"/><path d="M1.3 6.7 L4.7 2.6" stroke="#fff" stroke-width="1.0" stroke-linecap="round" fill="none"/><path d="M6.75 2 L6.75 6.8" stroke="#fff" stroke-width="0.95" fill="none"/></svg></div><div class="fld" style="top:308.8px;left:20px;right:23px"><span class="fl">Resolution U</span><span class="fv">2048</span></div><div class="fld" style="top:351.8px;left:20px;right:23px"><span class="fl">Resolution V</span><span class="fv">2048</span></div><div class="lab" style="top:394px;left:20px">UV</div><div class="cb" style="top:439.6px;left:20.8px"><svg class="ck" viewBox="0 0 10 10"><path d="M2 5.2 L4.2 7.6 L8.2 2.6" fill="none" stroke="#fff" stroke-width="1.6" stroke-linecap="round" stroke-linejoin="round"/></svg></div><div class="lab" style="top:437px;left:54px">Texte Flip</div></div><div class="node" style="left:1448px;top:1191.8px;width:530.4px;height:474.8px"><div class="hdr" style="height:38px;background:#83314a"><svg class="chev" viewBox="0 0 10 10"><path d="M1.5 3 L5 7 L8.5 3" fill="none" stroke="#e4e4e4" stroke-width="1.35" stroke-linecap="round" stroke-linejoin="round"/></svg><span class="ht" style="top:-1.6px">TriPoint.A Coordinates</span><svg class="gicon" viewBox="0 0 16 16"><rect x="2.1" y="0.6" width="8" height="4.6" rx="1.7" fill="#ececec"/><rect x="0" y="8.9" width="6.8" height="6.1" rx="1.5" fill="#ececec"/><path d="M10 2.9 C13 2.9 14.3 5 14.3 9.5" fill="none" stroke="#ececec" stroke-width="1.2" opacity="0.85"/><rect x="7.6" y="12.6" width="2.3" height="2.8" rx="0.5" fill="#ececec" opacity="0.9"/><rect x="12.8" y="10.8" width="2.8" height="4.6" rx="0.6" fill="#ececec" opacity="0.9"/></svg></div><div class="lab r" style="top:45.2px;right:22.4px"><span style="font-size:20.8px">To TriPoint.B ColorMixer</span></div><div class="lab r" style="top:86.2px;right:22.4px">UV A</div><div class="lab r" style="top:129.2px;right:22.4px">UV B</div><div class="lab r" style="top:172.2px;right:22.4px">UV C</div><div class="lab r" style="top:214.2px;right:22.4px">UV D</div><div class="sbtn" style="top:259.8px;left:18.8px;width:57.6px"><svg class="mico" viewBox="0 0 16 16"><circle cx="8" cy="8" r="7.3" fill="#e8e8e8"/><path d="M7.6 8.2 C7.2 5.5 7.4 3 8.2 0.8 A7.3 7.3 0 0 0 1.2 5.4 C3 6 5.5 7 7.6 8.2Z" fill="#262626"/><path d="M7.6 8.2 C10 9 12.6 9.4 15 9.6 A7.3 7.3 0 0 1 10 15 C9 13 8 10.5 7.6 8.2Z" fill="#262626"/><circle cx="8" cy="8" r="7.3" fill="none" stroke="#bdbdbd" stroke-width="0.8"/></svg><svg class="dchev" viewBox="0 0 10 10"><path d="M2 3.5 L5 6.5 L8 3.5" fill="none" stroke="#d8d8d8" stroke-width="1.9" stroke-linecap="round" stroke-linejoin="round"/></svg></div><div class="sname" style="top:259.8px;left:80px;width:319.2px">TriPoint.A Coordinates</div><div class="snum" style="top:259.8px;left:401.6px;width:67px">21</div><div class="sfake" style="top:259.8px;left:471.4px;width:36.2px"><svg class="fico" viewBox="0 0 9 8" preserveAspectRatio="none"><path d="M4.7 2.5 L5.6 0.9 L6.7 1.9 L6.7 6.8 L2.2 6.8 Z" fill="#fff" opacity="0.3"/><path d="M1.3 6.7 L4.7 2.6" stroke="#fff" stroke-width="1.0" stroke-linecap="round" fill="none"/><path d="M6.75 2 L6.75 6.8" stroke="#fff" stroke-width="0.95" fill="none"/></svg></div><div class="fld" style="top:306px;left:20px;right:23px"><span class="fl">Resolution U</span><span class="fv">2048</span></div><div class="fld" style="top:349px;left:20px;right:23px"><span class="fl">Resolution V</span><span class="fv">2048</span></div><div class="lab" style="top:391.2px;left:20px">UV</div><div class="cb" style="top:436.8px;left:20.8px"><svg class="ck" viewBox="0 0 10 10"><path d="M2 5.2 L4.2 7.6 L8.2 2.6" fill="none" stroke="#fff" stroke-width="1.6" stroke-linecap="round" stroke-linejoin="round"/></svg></div><div class="lab" style="top:434.2px;left:54px">Texte Flip</div></div><div class="prev grid" style="left:1612.4px;top:222px;width:200px;height:205.6px;"><i style="left:72px;top:49.2px;width:54px;height:3.6px;background:#f05a00"></i><i style="left:68.8px;top:84px;width:3.6px;height:32px;background:#7fe800"></i></div><div class="prev" style="left:1612.4px;top:980px;width:200px;height:204.4px;background:#e2e200"></div><div class="node" style="left:2072px;top:581.6px;width:530px;height:646.4px"><div class="hdr" style="height:38px;background:#3c3c83"><svg class="chev" viewBox="0 0 10 10"><path d="M1.5 3 L5 7 L8.5 3" fill="none" stroke="#e4e4e4" stroke-width="1.35" stroke-linecap="round" stroke-linejoin="round"/></svg><span class="ht" style="top:0.4px">Tripoint.AB Optional Tiling</span><svg class="gicon" viewBox="0 0 16 16"><rect x="2.1" y="0.6" width="8" height="4.6" rx="1.7" fill="#ececec"/><rect x="0" y="8.9" width="6.8" height="6.1" rx="1.5" fill="#ececec"/><path d="M10 2.9 C13 2.9 14.3 5 14.3 9.5" fill="none" stroke="#ececec" stroke-width="1.2" opacity="0.85"/><rect x="7.6" y="12.6" width="2.3" height="2.8" rx="0.5" fill="#ececec" opacity="0.9"/><rect x="12.8" y="10.8" width="2.8" height="4.6" rx="0.6" fill="#ececec" opacity="0.9"/></svg></div><div class="lab r" style="top:46.4px;right:22.4px">UV A</div><div class="lab r" style="top:89.4px;right:22.4px">UV B</div><div class="lab r" style="top:131.4px;right:22.4px">UV C</div><div class="lab r" style="top:174.4px;right:22.4px">UV D</div><div class="sbtn" style="top:221px;left:18.8px;width:56px"><svg class="mico" viewBox="0 0 16 16"><circle cx="8" cy="8" r="7.3" fill="#e8e8e8"/><path d="M7.6 8.2 C7.2 5.5 7.4 3 8.2 0.8 A7.3 7.3 0 0 0 1.2 5.4 C3 6 5.5 7 7.6 8.2Z" fill="#262626"/><path d="M7.6 8.2 C10 9 12.6 9.4 15 9.6 A7.3 7.3 0 0 1 10 15 C9 13 8 10.5 7.6 8.2Z" fill="#262626"/><circle cx="8" cy="8" r="7.3" fill="none" stroke="#bdbdbd" stroke-width="0.8"/></svg><svg class="dchev" viewBox="0 0 10 10"><path d="M2 3.5 L5 6.5 L8 3.5" fill="none" stroke="#d8d8d8" stroke-width="1.9" stroke-linecap="round" stroke-linejoin="round"/></svg></div><div class="sname" style="top:221px;left:78.4px;width:326px">Tripoint.AB Optional Tiling</div><div class="snum" style="top:221px;left:406.8px;width:61.6px">12</div><div class="sfake" style="top:221px;left:471.2px;width:35.6px"><svg class="fico" viewBox="0 0 9 8" preserveAspectRatio="none"><path d="M4.7 2.5 L5.6 0.9 L6.7 1.9 L6.7 6.8 L2.2 6.8 Z" fill="#fff" opacity="0.3"/><path d="M1.3 6.7 L4.7 2.6" stroke="#fff" stroke-width="1.0" stroke-linecap="round" fill="none"/><path d="M6.75 2 L6.75 6.8" stroke="#fff" stroke-width="0.95" fill="none"/></svg></div><div class="lab" style="top:266.4px;left:20px">Tripoint UV A</div><div class="lab" style="top:308.4px;left:20px">Tripoint UV B</div><div class="lab" style="top:350.4px;left:20px">Tripoint UV C</div><div class="lab" style="top:393.4px;left:20px">Tripoint UV D</div><div class="lab" style="top:435.4px;left:20px">Encode Attribute UV</div><div class="fld" style="top:478.2px;left:20px;right:23px"><span class="fl">Res Image U</span><span class="fv">2048</span></div><div class="fld" style="top:521.2px;left:20px;right:23px"><span class="fl">Res Image V</span><span class="fv">2048</span></div><div class="fld" style="top:563.2px;left:20px;right:23px"><span class="fl">Res Tile U</span><span class="fv">64</span></div><div class="fld" style="top:605.2px;left:20px;right:23px"><span class="fl">Res Tile V</span><span class="fv">64</span></div></div><div class="node" style="left:2056px;top:1341px;width:529px;height:638px"><div class="hdr" style="height:38px;background:#3c3c83"><svg class="chev" viewBox="0 0 10 10"><path d="M1.5 3 L5 7 L8.5 3" fill="none" stroke="#e4e4e4" stroke-width="1.35" stroke-linecap="round" stroke-linejoin="round"/></svg><span class="ht" style="top:3px">Tripoint.AB Optional Tiling</span><svg class="gicon" viewBox="0 0 16 16"><rect x="2.1" y="0.6" width="8" height="4.6" rx="1.7" fill="#ececec"/><rect x="0" y="8.9" width="6.8" height="6.1" rx="1.5" fill="#ececec"/><path d="M10 2.9 C13 2.9 14.3 5 14.3 9.5" fill="none" stroke="#ececec" stroke-width="1.2" opacity="0.85"/><rect x="7.6" y="12.6" width="2.3" height="2.8" rx="0.5" fill="#ececec" opacity="0.9"/><rect x="12.8" y="10.8" width="2.8" height="4.6" rx="0.6" fill="#ececec" opacity="0.9"/></svg></div><div class="lab r" style="top:47px;right:22.4px">UV A</div><div class="lab r" style="top:90px;right:22.4px">UV B</div><div class="lab r" style="top:133px;right:22.4px">UV C</div><div class="lab r" style="top:175px;right:22.4px">UV D</div><div class="sbtn" style="top:219.6px;left:18.8px;width:55.2px"><svg class="mico" viewBox="0 0 16 16"><circle cx="8" cy="8" r="7.3" fill="#e8e8e8"/><path d="M7.6 8.2 C7.2 5.5 7.4 3 8.2 0.8 A7.3 7.3 0 0 0 1.2 5.4 C3 6 5.5 7 7.6 8.2Z" fill="#262626"/><path d="M7.6 8.2 C10 9 12.6 9.4 15 9.6 A7.3 7.3 0 0 1 10 15 C9 13 8 10.5 7.6 8.2Z" fill="#262626"/><circle cx="8" cy="8" r="7.3" fill="none" stroke="#bdbdbd" stroke-width="0.8"/></svg><svg class="dchev" viewBox="0 0 10 10"><path d="M2 3.5 L5 6.5 L8 3.5" fill="none" stroke="#d8d8d8" stroke-width="1.9" stroke-linecap="round" stroke-linejoin="round"/></svg></div><div class="sname" style="top:219.6px;left:77.6px;width:327.2px">Tripoint.AB Optional Tiling</div><div class="snum" style="top:219.6px;left:407.2px;width:60px">12</div><div class="sfake" style="top:219.6px;left:470px;width:35.6px"><svg class="fico" viewBox="0 0 9 8" preserveAspectRatio="none"><path d="M4.7 2.5 L5.6 0.9 L6.7 1.9 L6.7 6.8 L2.2 6.8 Z" fill="#fff" opacity="0.3"/><path d="M1.3 6.7 L4.7 2.6" stroke="#fff" stroke-width="1.0" stroke-linecap="round" fill="none"/><path d="M6.75 2 L6.75 6.8" stroke="#fff" stroke-width="0.95" fill="none"/></svg></div><div class="lab" style="top:267px;left:20px">Tripoint UV A</div><div class="lab" style="top:308px;left:20px">Tripoint UV B</div><div class="lab" style="top:348px;left:20px">Tripoint UV C</div><div class="lab" style="top:389px;left:20px">Tripoint UV D</div><div class="lab" style="top:431px;left:20px">Encode Attribute UV</div><div class="fld" style="top:470.8px;left:20px;right:23px"><span class="fl">Res Image U</span><span class="fv">2048</span></div><div class="fld" style="top:511.2px;left:20px;right:23px"><span class="fl">Res Image V</span><span class="fv">2048</span></div><div class="fld" style="top:552px;left:20px;right:23px"><span class="fl">Res Tile U</span><span class="fv">64</span></div><div class="fld" style="top:592.8px;left:20px;right:23px"><span class="fl">Res Tile V</span><span class="fv">64</span></div></div><div class="pill" style="left:2681.6px;top:610px;width:448.8px;height:54px"><svg class="chev" viewBox="0 0 10 10"><path d="M3 1.5 L7 5 L3 8.5" fill="none" stroke="#e4e4e4" stroke-width="1.35" stroke-linecap="round" stroke-linejoin="round"/></svg><span class="ht"><span style="font-size:20.88px">TEX_ATLAS_FOREST.png</span></span><span class="grip"></span></div><div class="pill" style="left:2681.6px;top:686px;width:448.8px;height:54px"><svg class="chev" viewBox="0 0 10 10"><path d="M3 1.5 L7 5 L3 8.5" fill="none" stroke="#e4e4e4" stroke-width="1.35" stroke-linecap="round" stroke-linejoin="round"/></svg><span class="ht"><span style="font-size:20.88px">TEX_ATLAS_FOREST.png</span></span><span class="grip"></span></div><div class="pill" style="left:2681.6px;top:761px;width:448.8px;height:54px"><svg class="chev" viewBox="0 0 10 10"><path d="M3 1.5 L7 5 L3 8.5" fill="none" stroke="#e4e4e4" stroke-width="1.35" stroke-linecap="round" stroke-linejoin="round"/></svg><span class="ht"><span style="font-size:20.88px">TEX_ATLAS_FOREST.png</span></span><span class="grip"></span></div><div class="pill" style="left:2681.6px;top:837px;width:448.8px;height:54px"><svg class="chev" viewBox="0 0 10 10"><path d="M3 1.5 L7 5 L3 8.5" fill="none" stroke="#e4e4e4" stroke-width="1.35" stroke-linecap="round" stroke-linejoin="round"/></svg><span class="ht"><span style="font-size:20.88px">TEX_ATLAS_FOREST.png</span></span><span class="grip"></span></div><div class="pill" style="left:2665.6px;top:1370px;width:448.8px;height:54px"><svg class="chev" viewBox="0 0 10 10"><path d="M3 1.5 L7 5 L3 8.5" fill="none" stroke="#e4e4e4" stroke-width="1.35" stroke-linecap="round" stroke-linejoin="round"/></svg><span class="ht"><span style="font-size:20.88px">TEX_ATLAS_FOREST.png</span></span><span class="grip"></span></div><div class="pill" style="left:2665.6px;top:1445px;width:448.8px;height:54px"><svg class="chev" viewBox="0 0 10 10"><path d="M3 1.5 L7 5 L3 8.5" fill="none" stroke="#e4e4e4" stroke-width="1.35" stroke-linecap="round" stroke-linejoin="round"/></svg><span class="ht"><span style="font-size:20.88px">TEX_ATLAS_FOREST.png</span></span><span class="grip"></span></div><div class="pill" style="left:2665.6px;top:1521.6px;width:448.8px;height:54px"><svg class="chev" viewBox="0 0 10 10"><path d="M3 1.5 L7 5 L3 8.5" fill="none" stroke="#e4e4e4" stroke-width="1.35" stroke-linecap="round" stroke-linejoin="round"/></svg><span class="ht"><span style="font-size:20.88px">TEX_ATLAS_FOREST.png</span></span><span class="grip"></span></div><div class="pill" style="left:2665.6px;top:1598px;width:448.8px;height:54px"><svg class="chev" viewBox="0 0 10 10"><path d="M3 1.5 L7 5 L3 8.5" fill="none" stroke="#e4e4e4" stroke-width="1.35" stroke-linecap="round" stroke-linejoin="round"/></svg><span class="ht"><span style="font-size:20.88px">TEX_ATLAS_FOREST.png</span></span><span class="grip"></span></div><div class="node" style="left:3212.4px;top:316.4px;width:529.6px;height:562px"><div class="hdr" style="height:38px;background:#79791f"><svg class="chev" viewBox="0 0 10 10"><path d="M1.5 3 L5 7 L8.5 3" fill="none" stroke="#e4e4e4" stroke-width="1.35" stroke-linecap="round" stroke-linejoin="round"/></svg><span class="ht" style="top:-1.2px">TriPoint.B ColorMixer</span><svg class="gicon" viewBox="0 0 16 16"><rect x="2.1" y="0.6" width="8" height="4.6" rx="1.7" fill="#ececec"/><rect x="0" y="8.9" width="6.8" height="6.1" rx="1.5" fill="#ececec"/><path d="M10 2.9 C13 2.9 14.3 5 14.3 9.5" fill="none" stroke="#ececec" stroke-width="1.2" opacity="0.85"/><rect x="7.6" y="12.6" width="2.3" height="2.8" rx="0.5" fill="#ececec" opacity="0.9"/><rect x="12.8" y="10.8" width="2.8" height="4.6" rx="0.6" fill="#ececec" opacity="0.9"/></svg></div><div class="lab r" style="top:45.6px;right:22.4px">Color</div><div class="lab r" style="top:88.6px;right:22.4px">Alpha</div><div class="sbtn" style="top:134.2px;left:17.6px;width:55.6px"><svg class="mico" viewBox="0 0 16 16"><circle cx="8" cy="8" r="7.3" fill="#e8e8e8"/><path d="M7.6 8.2 C7.2 5.5 7.4 3 8.2 0.8 A7.3 7.3 0 0 0 1.2 5.4 C3 6 5.5 7 7.6 8.2Z" fill="#262626"/><path d="M7.6 8.2 C10 9 12.6 9.4 15 9.6 A7.3 7.3 0 0 1 10 15 C9 13 8 10.5 7.6 8.2Z" fill="#262626"/><circle cx="8" cy="8" r="7.3" fill="none" stroke="#bdbdbd" stroke-width="0.8"/></svg><svg class="dchev" viewBox="0 0 10 10"><path d="M2 3.5 L5 6.5 L8 3.5" fill="none" stroke="#d8d8d8" stroke-width="1.9" stroke-linecap="round" stroke-linejoin="round"/></svg></div><div class="sname" style="top:134.2px;left:76.8px;width:317.2px">TriPoint.B ColorMixer</div><div class="snum" style="top:134.2px;left:396.4px;width:73.2px">21</div><div class="sfake" style="top:134.2px;left:472.4px;width:35.2px"><svg class="fico" viewBox="0 0 9 8" preserveAspectRatio="none"><path d="M4.7 2.5 L5.6 0.9 L6.7 1.9 L6.7 6.8 L2.2 6.8 Z" fill="#fff" opacity="0.3"/><path d="M1.3 6.7 L4.7 2.6" stroke="#fff" stroke-width="1.0" stroke-linecap="round" fill="none"/><path d="M6.75 2 L6.75 6.8" stroke="#fff" stroke-width="0.95" fill="none"/></svg></div><div class="lab" style="top:178.6px;left:20px">From TriPoint.A Coordinates</div><div class="lab" style="top:222.6px;left:20px">Color A</div><div class="lab" style="top:264.6px;left:20px">Alpha A</div><div class="lab" style="top:307.6px;left:20px">Color B</div><div class="lab" style="top:350.6px;left:20px">Alpha B</div><div class="lab" style="top:393.6px;left:20px">Color C</div><div class="lab" style="top:435.6px;left:20px">Alpha C</div><div class="lab" style="top:477.6px;left:20px">Color D</div><div class="lab" style="top:520.6px;left:20px">Alpha D</div></div><div class="node" style="left:3195px;top:1075.6px;width:529px;height:564.4px"><div class="hdr" style="height:38px;background:#79791f"><svg class="chev" viewBox="0 0 10 10"><path d="M1.5 3 L5 7 L8.5 3" fill="none" stroke="#e4e4e4" stroke-width="1.35" stroke-linecap="round" stroke-linejoin="round"/></svg><span class="ht" style="top:1.2px">TriPoint.B ColorMixer</span><svg class="gicon" viewBox="0 0 16 16"><rect x="2.1" y="0.6" width="8" height="4.6" rx="1.7" fill="#ececec"/><rect x="0" y="8.9" width="6.8" height="6.1" rx="1.5" fill="#ececec"/><path d="M10 2.9 C13 2.9 14.3 5 14.3 9.5" fill="none" stroke="#ececec" stroke-width="1.2" opacity="0.85"/><rect x="7.6" y="12.6" width="2.3" height="2.8" rx="0.5" fill="#ececec" opacity="0.9"/><rect x="12.8" y="10.8" width="2.8" height="4.6" rx="0.6" fill="#ececec" opacity="0.9"/></svg></div><div class="lab r" style="top:47.4px;right:22.4px">Color</div><div class="lab r" style="top:89.4px;right:22.4px">Alpha</div><div class="sbtn" style="top:134px;left:19px;width:54px"><svg class="mico" viewBox="0 0 16 16"><circle cx="8" cy="8" r="7.3" fill="#e8e8e8"/><path d="M7.6 8.2 C7.2 5.5 7.4 3 8.2 0.8 A7.3 7.3 0 0 0 1.2 5.4 C3 6 5.5 7 7.6 8.2Z" fill="#262626"/><path d="M7.6 8.2 C10 9 12.6 9.4 15 9.6 A7.3 7.3 0 0 1 10 15 C9 13 8 10.5 7.6 8.2Z" fill="#262626"/><circle cx="8" cy="8" r="7.3" fill="none" stroke="#bdbdbd" stroke-width="0.8"/></svg><svg class="dchev" viewBox="0 0 10 10"><path d="M2 3.5 L5 6.5 L8 3.5" fill="none" stroke="#d8d8d8" stroke-width="1.9" stroke-linecap="round" stroke-linejoin="round"/></svg></div><div class="sname" style="top:134px;left:76.6px;width:318.8px">TriPoint.B ColorMixer</div><div class="snum" style="top:134px;left:397.8px;width:71.6px">21</div><div class="sfake" style="top:134px;left:472.2px;width:35.2px"><svg class="fico" viewBox="0 0 9 8" preserveAspectRatio="none"><path d="M4.7 2.5 L5.6 0.9 L6.7 1.9 L6.7 6.8 L2.2 6.8 Z" fill="#fff" opacity="0.3"/><path d="M1.3 6.7 L4.7 2.6" stroke="#fff" stroke-width="1.0" stroke-linecap="round" fill="none"/><path d="M6.75 2 L6.75 6.8" stroke="#fff" stroke-width="0.95" fill="none"/></svg></div><div class="lab" style="top:180.4px;left:20px">From TriPoint.A Coordinates</div><div class="lab" style="top:222.4px;left:20px">Color A</div><div class="lab" style="top:265.4px;left:20px">Alpha A</div><div class="lab" style="top:308.4px;left:20px">Color B</div><div class="lab" style="top:351.4px;left:20px">Alpha B</div><div class="lab" style="top:392.4px;left:20px">Color C</div><div class="lab" style="top:436.4px;left:20px">Alpha C</div><div class="lab" style="top:479.4px;left:20px">Color D</div><div class="lab" style="top:521.4px;left:20px">Alpha D</div></div><div class="node sel" style="left:3956px;top:316px;width:568.8px;height:348.8px"><div class="hdr" style="height:36.4px;background:#2b652b"><svg class="chev" viewBox="0 0 10 10"><path d="M1.5 3 L5 7 L8.5 3" fill="none" stroke="#e4e4e4" stroke-width="1.35" stroke-linecap="round" stroke-linejoin="round"/></svg><span class="ht" style="top:-0.2px"><span style="font-size:19.6px">Vertex Light 3 - Master UE5 Atlas</span></span><svg class="gicon" viewBox="0 0 16 16"><rect x="2.1" y="0.6" width="8" height="4.6" rx="1.7" fill="#ececec"/><rect x="0" y="8.9" width="6.8" height="6.1" rx="1.5" fill="#ececec"/><path d="M10 2.9 C13 2.9 14.3 5 14.3 9.5" fill="none" stroke="#ececec" stroke-width="1.2" opacity="0.85"/><rect x="7.6" y="12.6" width="2.3" height="2.8" rx="0.5" fill="#ececec" opacity="0.9"/><rect x="12.8" y="10.8" width="2.8" height="4.6" rx="0.6" fill="#ececec" opacity="0.9"/></svg></div><div class="lab r" style="top:47px;right:22.4px">Shader</div><div class="sbtn" style="top:91.6px;left:17.6px;width:56.8px"><svg class="mico" viewBox="0 0 16 16"><circle cx="8" cy="8" r="7.3" fill="#e8e8e8"/><path d="M7.6 8.2 C7.2 5.5 7.4 3 8.2 0.8 A7.3 7.3 0 0 0 1.2 5.4 C3 6 5.5 7 7.6 8.2Z" fill="#262626"/><path d="M7.6 8.2 C10 9 12.6 9.4 15 9.6 A7.3 7.3 0 0 1 10 15 C9 13 8 10.5 7.6 8.2Z" fill="#262626"/><circle cx="8" cy="8" r="7.3" fill="none" stroke="#bdbdbd" stroke-width="0.8"/></svg><svg class="dchev" viewBox="0 0 10 10"><path d="M2 3.5 L5 6.5 L8 3.5" fill="none" stroke="#d8d8d8" stroke-width="1.9" stroke-linecap="round" stroke-linejoin="round"/></svg></div><div class="sname" style="top:91.6px;left:78px;width:378.4px"><span style="font-size:19.6px">Vertex Light 3 - Master UE5 Atlas</span></div><div class="snum" style="top:91.6px;left:458.8px;width:46.4px">7</div><div class="sfake" style="top:91.6px;left:508px;width:35.6px"><svg class="fico" viewBox="0 0 9 8" preserveAspectRatio="none"><path d="M4.7 2.5 L5.6 0.9 L6.7 1.9 L6.7 6.8 L2.2 6.8 Z" fill="#fff" opacity="0.3"/><path d="M1.3 6.7 L4.7 2.6" stroke="#fff" stroke-width="1.0" stroke-linecap="round" fill="none"/><path d="M6.75 2 L6.75 6.8" stroke="#fff" stroke-width="0.95" fill="none"/></svg></div><div class="lab" style="top:138px;left:20px">Color 0</div><div class="lab" style="top:180px;left:20px">Alpha 0</div><div class="lab" style="top:223px;left:20px">Color 1</div><div class="lab" style="top:266px;left:20px">Alpha 1</div><div class="cb" style="top:309.6px;left:20.8px"><svg class="ck" viewBox="0 0 10 10"><path d="M2 5.2 L4.2 7.6 L8.2 2.6" fill="none" stroke="#fff" stroke-width="1.6" stroke-linecap="round" stroke-linejoin="round"/></svg></div><div class="lab" style="top:307px;left:54px">Backface Culling</div></div><div class="node" style="left:4640px;top:277px;width:264px;height:268.8px"><div class="hdr" style="height:38px;background:#3f1c27"><svg class="chev" viewBox="0 0 10 10"><path d="M1.5 3 L5 7 L8.5 3" fill="none" stroke="#e4e4e4" stroke-width="1.35" stroke-linecap="round" stroke-linejoin="round"/></svg><span class="ht" style="top:-0.4px"><span style="font-size:19.2px">Material Output</span></span></div><div class="drop" style="top:51px;left:18.4px;right:18.4px"><span>All</span><svg class="dchev" viewBox="0 0 10 10"><path d="M2 3.5 L5 6.5 L8 3.5" fill="none" stroke="#d8d8d8" stroke-width="1.9" stroke-linecap="round" stroke-linejoin="round"/></svg></div><div class="lab" style="top:96px;left:20px">Surface</div><div class="lab" style="top:139px;left:20px">Volume</div><div class="lab" style="top:180px;left:20px"><span style="font-size:19.4px">Displacement</span></div><div class="lab" style="top:223px;left:20px">Thickness</div></div>
<svg class="layer" viewBox="0 0 1280 567"><circle cx="167.35" cy="189.85" r="2.1" fill="#6363c7" stroke="rgba(0,0,0,0.45)" stroke-width="0.4"/><circle cx="167.35" cy="246.6" r="2.1" fill="#6363c7" stroke="rgba(0,0,0,0.45)" stroke-width="0.4"/><circle cx="157.85" cy="379.85" r="2.1" fill="#6363c7" stroke="rgba(0,0,0,0.45)" stroke-width="0.4"/><circle cx="157.85" cy="446.1" r="2.1" fill="#6363c7" stroke="rgba(0,0,0,0.45)" stroke-width="0.4"/><circle cx="324.0" cy="170.5" r="2.1" fill="#6363c7" stroke="rgba(0,0,0,0.45)" stroke-width="0.4"/><circle cx="218.95" cy="193.25" r="2.1" fill="#6363c7" stroke="rgba(0,0,0,0.45)" stroke-width="0.4"/><circle cx="219.25" cy="204" r="2.1" fill="#598c5c" stroke="rgba(0,0,0,0.45)" stroke-width="0.4"/><circle cx="219.25" cy="214.75" r="2.1" fill="#598c5c" stroke="rgba(0,0,0,0.45)" stroke-width="0.4"/><circle cx="219.25" cy="225.25" r="2.1" fill="#598c5c" stroke="rgba(0,0,0,0.45)" stroke-width="0.4"/><circle cx="219.25" cy="235.75" r="2.1" fill="#598c5c" stroke="rgba(0,0,0,0.45)" stroke-width="0.4"/><circle cx="494.95000000000005" cy="123.0" r="2.1" fill="#6363c7" stroke="rgba(0,0,0,0.45)" stroke-width="0.4"/><circle cx="494.95000000000005" cy="133.25" r="2.1" fill="#6363c7" stroke="rgba(0,0,0,0.45)" stroke-width="0.4"/><circle cx="494.95000000000005" cy="144.0" r="2.1" fill="#6363c7" stroke="rgba(0,0,0,0.45)" stroke-width="0.4"/><circle cx="494.95000000000005" cy="154.75" r="2.1" fill="#6363c7" stroke="rgba(0,0,0,0.45)" stroke-width="0.4"/><circle cx="494.95000000000005" cy="165.25" r="2.1" fill="#6363c7" stroke="rgba(0,0,0,0.45)" stroke-width="0.4"/><circle cx="362" cy="188.5" r="2.1" fill="#598c5c" stroke="rgba(0,0,0,0.45)" stroke-width="0.4"/><circle cx="362" cy="199.25" r="2.1" fill="#598c5c" stroke="rgba(0,0,0,0.45)" stroke-width="0.4"/><circle cx="361.7" cy="209.5" r="2.1" fill="#6363c7" stroke="rgba(0,0,0,0.45)" stroke-width="0.4"/><circle cx="362" cy="220.25" r="2.1" fill="#cca6d6" stroke="rgba(0,0,0,0.45)" stroke-width="0.4"/><circle cx="494.95000000000005" cy="313.0" r="2.1" fill="#6363c7" stroke="rgba(0,0,0,0.45)" stroke-width="0.4"/><circle cx="494.95000000000005" cy="323.25" r="2.1" fill="#6363c7" stroke="rgba(0,0,0,0.45)" stroke-width="0.4"/><circle cx="494.95000000000005" cy="334.0" r="2.1" fill="#6363c7" stroke="rgba(0,0,0,0.45)" stroke-width="0.4"/><circle cx="494.95000000000005" cy="344.75" r="2.1" fill="#6363c7" stroke="rgba(0,0,0,0.45)" stroke-width="0.4"/><circle cx="494.95000000000005" cy="355.25" r="2.1" fill="#6363c7" stroke="rgba(0,0,0,0.45)" stroke-width="0.4"/><circle cx="362" cy="378.5" r="2.1" fill="#598c5c" stroke="rgba(0,0,0,0.45)" stroke-width="0.4"/><circle cx="362" cy="389.25" r="2.1" fill="#598c5c" stroke="rgba(0,0,0,0.45)" stroke-width="0.4"/><circle cx="361.7" cy="399.5" r="2.1" fill="#6363c7" stroke="rgba(0,0,0,0.45)" stroke-width="0.4"/><circle cx="362" cy="410.25" r="2.1" fill="#cca6d6" stroke="rgba(0,0,0,0.45)" stroke-width="0.4"/><circle cx="650.85" cy="160.75" r="2.1" fill="#6363c7" stroke="rgba(0,0,0,0.45)" stroke-width="0.4"/><circle cx="650.85" cy="171.5" r="2.1" fill="#6363c7" stroke="rgba(0,0,0,0.45)" stroke-width="0.4"/><circle cx="650.85" cy="182" r="2.1" fill="#6363c7" stroke="rgba(0,0,0,0.45)" stroke-width="0.4"/><circle cx="650.85" cy="192.75" r="2.1" fill="#6363c7" stroke="rgba(0,0,0,0.45)" stroke-width="0.4"/><circle cx="517.7" cy="215.75" r="2.1" fill="#6363c7" stroke="rgba(0,0,0,0.45)" stroke-width="0.4"/><circle cx="517.7" cy="226.25" r="2.1" fill="#6363c7" stroke="rgba(0,0,0,0.45)" stroke-width="0.4"/><circle cx="517.7" cy="236.75" r="2.1" fill="#6363c7" stroke="rgba(0,0,0,0.45)" stroke-width="0.4"/><circle cx="517.7" cy="247.5" r="2.1" fill="#6363c7" stroke="rgba(0,0,0,0.45)" stroke-width="0.4"/><circle cx="517.7" cy="258" r="2.1" fill="#6363c7" stroke="rgba(0,0,0,0.45)" stroke-width="0.4"/><circle cx="518" cy="269" r="2.1" fill="#598c5c" stroke="rgba(0,0,0,0.45)" stroke-width="0.4"/><circle cx="518" cy="279.75" r="2.1" fill="#598c5c" stroke="rgba(0,0,0,0.45)" stroke-width="0.4"/><circle cx="518" cy="290.25" r="2.1" fill="#598c5c" stroke="rgba(0,0,0,0.45)" stroke-width="0.4"/><circle cx="518" cy="300.75" r="2.1" fill="#598c5c" stroke="rgba(0,0,0,0.45)" stroke-width="0.4"/><circle cx="646.6" cy="350.75" r="2.1" fill="#6363c7" stroke="rgba(0,0,0,0.45)" stroke-width="0.4"/><circle cx="646.6" cy="361.5" r="2.1" fill="#6363c7" stroke="rgba(0,0,0,0.45)" stroke-width="0.4"/><circle cx="646.6" cy="372.25" r="2.1" fill="#6363c7" stroke="rgba(0,0,0,0.45)" stroke-width="0.4"/><circle cx="646.6" cy="382.75" r="2.1" fill="#6363c7" stroke="rgba(0,0,0,0.45)" stroke-width="0.4"/><circle cx="513.7" cy="405.75" r="2.1" fill="#6363c7" stroke="rgba(0,0,0,0.45)" stroke-width="0.4"/><circle cx="513.7" cy="416" r="2.1" fill="#6363c7" stroke="rgba(0,0,0,0.45)" stroke-width="0.4"/><circle cx="513.7" cy="426" r="2.1" fill="#6363c7" stroke="rgba(0,0,0,0.45)" stroke-width="0.4"/><circle cx="513.7" cy="436.25" r="2.1" fill="#6363c7" stroke="rgba(0,0,0,0.45)" stroke-width="0.4"/><circle cx="513.7" cy="446.75" r="2.1" fill="#6363c7" stroke="rgba(0,0,0,0.45)" stroke-width="0.4"/><circle cx="514" cy="457" r="2.1" fill="#598c5c" stroke="rgba(0,0,0,0.45)" stroke-width="0.4"/><circle cx="514" cy="467.1" r="2.1" fill="#598c5c" stroke="rgba(0,0,0,0.45)" stroke-width="0.4"/><circle cx="514" cy="477.3" r="2.1" fill="#598c5c" stroke="rgba(0,0,0,0.45)" stroke-width="0.4"/><circle cx="514" cy="487.5" r="2.1" fill="#598c5c" stroke="rgba(0,0,0,0.45)" stroke-width="0.4"/><circle cx="670.4" cy="159.1" r="2.1" fill="#6363c7" stroke="rgba(0,0,0,0.45)" stroke-width="0.4"/><circle cx="782.6" cy="155.5" r="2.1" fill="#c7c729" stroke="rgba(0,0,0,0.45)" stroke-width="0.4"/><circle cx="782.6" cy="162.5" r="2.1" fill="#b2b2b2" stroke="rgba(0,0,0,0.45)" stroke-width="0.4"/><circle cx="670.4" cy="178.1" r="2.1" fill="#6363c7" stroke="rgba(0,0,0,0.45)" stroke-width="0.4"/><circle cx="782.6" cy="174.5" r="2.1" fill="#c7c729" stroke="rgba(0,0,0,0.45)" stroke-width="0.4"/><circle cx="782.6" cy="181.5" r="2.1" fill="#b2b2b2" stroke="rgba(0,0,0,0.45)" stroke-width="0.4"/><circle cx="670.4" cy="196.85" r="2.1" fill="#6363c7" stroke="rgba(0,0,0,0.45)" stroke-width="0.4"/><circle cx="782.6" cy="193.25" r="2.1" fill="#c7c729" stroke="rgba(0,0,0,0.45)" stroke-width="0.4"/><circle cx="782.6" cy="200.25" r="2.1" fill="#b2b2b2" stroke="rgba(0,0,0,0.45)" stroke-width="0.4"/><circle cx="670.4" cy="215.85" r="2.1" fill="#6363c7" stroke="rgba(0,0,0,0.45)" stroke-width="0.4"/><circle cx="782.6" cy="212.25" r="2.1" fill="#c7c729" stroke="rgba(0,0,0,0.45)" stroke-width="0.4"/><circle cx="782.6" cy="219.25" r="2.1" fill="#b2b2b2" stroke="rgba(0,0,0,0.45)" stroke-width="0.4"/><circle cx="666.4" cy="349.1" r="2.1" fill="#6363c7" stroke="rgba(0,0,0,0.45)" stroke-width="0.4"/><circle cx="778.6" cy="345.5" r="2.1" fill="#c7c729" stroke="rgba(0,0,0,0.45)" stroke-width="0.4"/><circle cx="778.6" cy="352.5" r="2.1" fill="#b2b2b2" stroke="rgba(0,0,0,0.45)" stroke-width="0.4"/><circle cx="666.4" cy="367.85" r="2.1" fill="#6363c7" stroke="rgba(0,0,0,0.45)" stroke-width="0.4"/><circle cx="778.6" cy="364.25" r="2.1" fill="#c7c729" stroke="rgba(0,0,0,0.45)" stroke-width="0.4"/><circle cx="778.6" cy="371.25" r="2.1" fill="#b2b2b2" stroke="rgba(0,0,0,0.45)" stroke-width="0.4"/><circle cx="666.4" cy="387.0" r="2.1" fill="#6363c7" stroke="rgba(0,0,0,0.45)" stroke-width="0.4"/><circle cx="778.6" cy="383.4" r="2.1" fill="#c7c729" stroke="rgba(0,0,0,0.45)" stroke-width="0.4"/><circle cx="778.6" cy="390.4" r="2.1" fill="#b2b2b2" stroke="rgba(0,0,0,0.45)" stroke-width="0.4"/><circle cx="666.4" cy="406.1" r="2.1" fill="#6363c7" stroke="rgba(0,0,0,0.45)" stroke-width="0.4"/><circle cx="778.6" cy="402.5" r="2.1" fill="#c7c729" stroke="rgba(0,0,0,0.45)" stroke-width="0.4"/><circle cx="778.6" cy="409.5" r="2.1" fill="#b2b2b2" stroke="rgba(0,0,0,0.45)" stroke-width="0.4"/><circle cx="935.85" cy="94.25" r="2.1" fill="#c7c729" stroke="rgba(0,0,0,0.45)" stroke-width="0.4"/><circle cx="935.85" cy="105" r="2.1" fill="#b2b2b2" stroke="rgba(0,0,0,0.45)" stroke-width="0.4"/><circle cx="802.8000000000001" cy="127.5" r="2.1" fill="#6363c7" stroke="rgba(0,0,0,0.45)" stroke-width="0.4"/><circle cx="802.8000000000001" cy="138.5" r="2.1" fill="#c7c729" stroke="rgba(0,0,0,0.45)" stroke-width="0.4"/><circle cx="802.8000000000001" cy="149" r="2.1" fill="#b2b2b2" stroke="rgba(0,0,0,0.45)" stroke-width="0.4"/><circle cx="802.8000000000001" cy="159.75" r="2.1" fill="#c7c729" stroke="rgba(0,0,0,0.45)" stroke-width="0.4"/><circle cx="802.8000000000001" cy="170.5" r="2.1" fill="#b2b2b2" stroke="rgba(0,0,0,0.45)" stroke-width="0.4"/><circle cx="802.8000000000001" cy="181.25" r="2.1" fill="#c7c729" stroke="rgba(0,0,0,0.45)" stroke-width="0.4"/><circle cx="802.8000000000001" cy="191.75" r="2.1" fill="#b2b2b2" stroke="rgba(0,0,0,0.45)" stroke-width="0.4"/><circle cx="802.8000000000001" cy="202.25" r="2.1" fill="#c7c729" stroke="rgba(0,0,0,0.45)" stroke-width="0.4"/><circle cx="802.8000000000001" cy="213" r="2.1" fill="#b2b2b2" stroke="rgba(0,0,0,0.45)" stroke-width="0.4"/><circle cx="931.35" cy="284.5" r="2.1" fill="#c7c729" stroke="rgba(0,0,0,0.45)" stroke-width="0.4"/><circle cx="931.35" cy="295" r="2.1" fill="#b2b2b2" stroke="rgba(0,0,0,0.45)" stroke-width="0.4"/><circle cx="798.45" cy="317.75" r="2.1" fill="#6363c7" stroke="rgba(0,0,0,0.45)" stroke-width="0.4"/><circle cx="798.45" cy="328.25" r="2.1" fill="#c7c729" stroke="rgba(0,0,0,0.45)" stroke-width="0.4"/><circle cx="798.45" cy="339" r="2.1" fill="#b2b2b2" stroke="rgba(0,0,0,0.45)" stroke-width="0.4"/><circle cx="798.45" cy="349.75" r="2.1" fill="#c7c729" stroke="rgba(0,0,0,0.45)" stroke-width="0.4"/><circle cx="798.45" cy="360.5" r="2.1" fill="#b2b2b2" stroke="rgba(0,0,0,0.45)" stroke-width="0.4"/><circle cx="798.45" cy="370.75" r="2.1" fill="#c7c729" stroke="rgba(0,0,0,0.45)" stroke-width="0.4"/><circle cx="798.45" cy="381.75" r="2.1" fill="#b2b2b2" stroke="rgba(0,0,0,0.45)" stroke-width="0.4"/><circle cx="798.45" cy="392.5" r="2.1" fill="#c7c729" stroke="rgba(0,0,0,0.45)" stroke-width="0.4"/><circle cx="798.45" cy="403" r="2.1" fill="#b2b2b2" stroke="rgba(0,0,0,0.45)" stroke-width="0.4"/><circle cx="1131.55" cy="94.5" r="2.1" fill="#63c763" stroke="rgba(0,0,0,0.45)" stroke-width="0.4"/><circle cx="988.7" cy="117.25" r="2.1" fill="#c7c729" stroke="rgba(0,0,0,0.45)" stroke-width="0.4"/><circle cx="988.7" cy="127.75" r="2.1" fill="#b2b2b2" stroke="rgba(0,0,0,0.45)" stroke-width="0.4"/><circle cx="988.7" cy="138.5" r="2.1" fill="#c7c729" stroke="rgba(0,0,0,0.45)" stroke-width="0.4"/><circle cx="988.7" cy="149.25" r="2.1" fill="#b2b2b2" stroke="rgba(0,0,0,0.45)" stroke-width="0.4"/><circle cx="989" cy="159.5" r="2.1" fill="#cca6d6" stroke="rgba(0,0,0,0.45)" stroke-width="0.4"/><circle cx="1159.7" cy="97" r="2.1" fill="#63c763" stroke="rgba(0,0,0,0.45)" stroke-width="0.4"/><circle cx="1159.7" cy="107.75" r="2.1" fill="#63c763" stroke="rgba(0,0,0,0.45)" stroke-width="0.4"/><circle cx="1159.7" cy="118" r="2.1" fill="#6363c7" stroke="rgba(0,0,0,0.45)" stroke-width="0.4"/><circle cx="1159.7" cy="128.75" r="2.1" fill="#b2b2b2" stroke="rgba(0,0,0,0.45)" stroke-width="0.4"/></svg>
</div></div></body></html>
